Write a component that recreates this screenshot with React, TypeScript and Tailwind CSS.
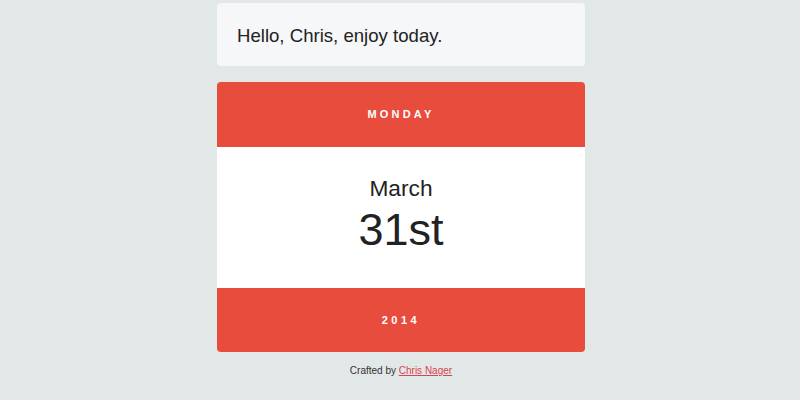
export default function App() {
  return (
    <div className="min-h-[400px] w-full bg-[#e2e7e7] font-['Liberation_Sans',Arial,sans-serif]">
      <div className="mx-auto flex w-[368px] translate-x-[1px] flex-col pt-[3px]">
        <div className="flex h-[63px] items-center rounded bg-[#f5f7f8] px-5 pt-[3px]">
          <p className="text-[18.6px] leading-[22px] text-[#222]">Hello, Chris, enjoy today.</p>
        </div>

        <div className="mt-4 overflow-hidden rounded">
          <div className="flex h-[65px] items-center justify-center bg-[#e74c3c]">
            <span className="text-[11px] font-bold tracking-[3.2px] text-white">MONDAY</span>
          </div>
          <div className="flex h-[141px] flex-col items-center bg-white pt-[30px] text-[#222]">
            <span className="text-[22.7px] leading-[22px]">March</span>
            <span className="mt-[8px] text-[45px] leading-[45px]">31st</span>
          </div>
          <div className="flex h-[64px] items-center justify-center bg-[#e74c3c]">
            <span className="text-[11px] font-bold tracking-[3.5px] text-white">2014</span>
          </div>
        </div>

        <p className="mt-[11px] text-center text-[10px] text-[#333]">
          Crafted by{" "}
          <a href="#" className="text-[#d9434f] underline">
            Chris Nager
          </a>
        </p>
      </div>
    </div>
  );
}
